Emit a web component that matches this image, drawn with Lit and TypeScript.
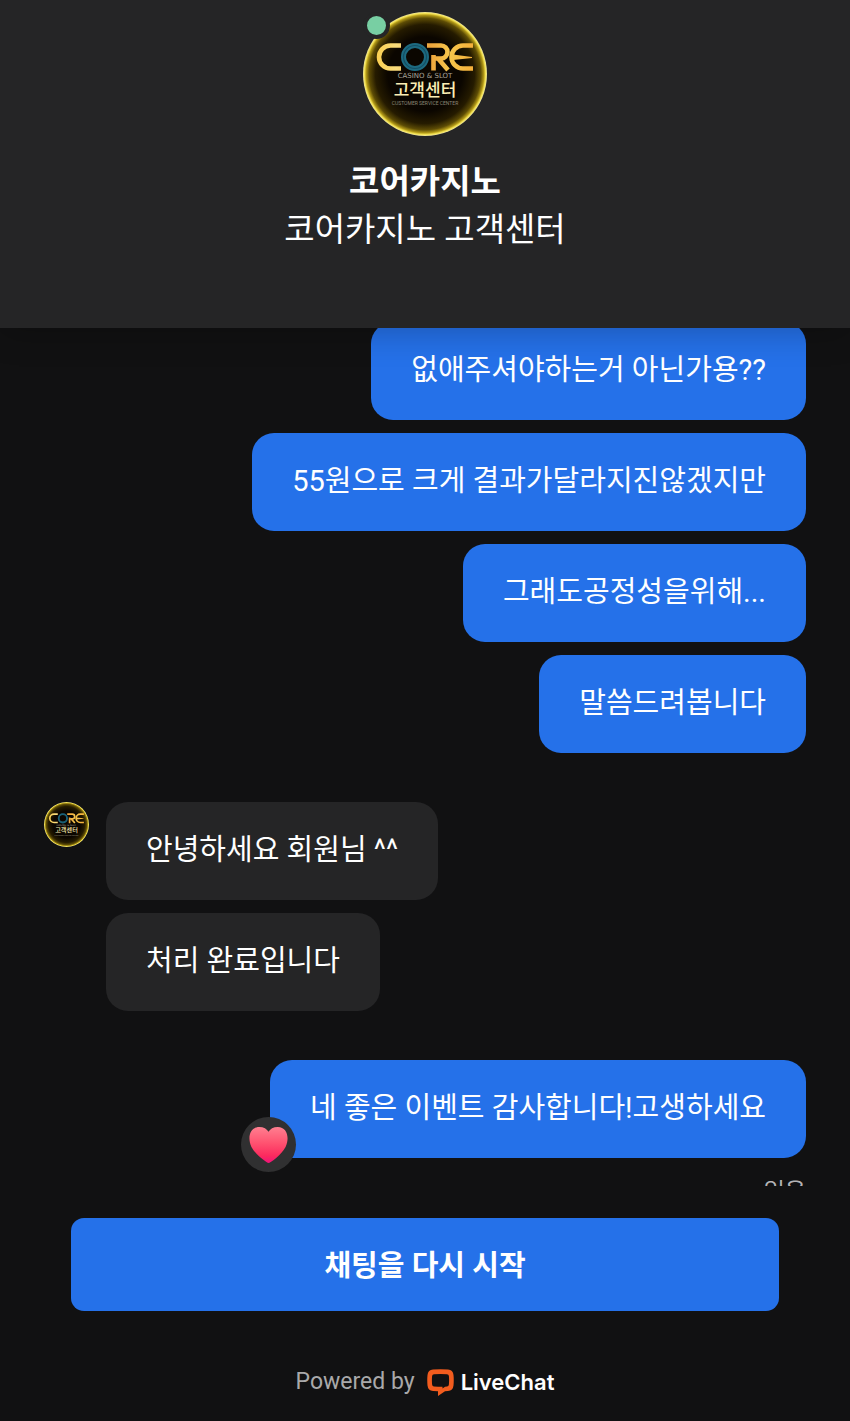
import { LitElement, html, css, svg } from "lit";
import { customElement } from "lit/decorators.js";

const FONT = css`Roboto, "Noto Sans CJK KR", sans-serif`;

@customElement("brand-avatar")
export class BrandAvatar extends LitElement {
  static styles = css`
    :host { display: block; }
    .logo { display: block; width: 100%; height: auto; }
    .name { font: 500 17px "Noto Sans CJK KR", sans-serif; fill: #fbeeb4; }
    .tag { font: 400 7px "DejaVu Sans", sans-serif; fill: #a8a49a; }
    .sub { font: 400 5px Roboto, sans-serif; fill: #8d8775; }
  `;

  render() {
    return html`<svg class="logo" viewBox="0 0 124 124" role="img" aria-label="CORE">
      <defs>
        <radialGradient id="disc">
          <stop offset="0.6" stop-color="#0b0600"></stop>
          <stop offset="0.8" stop-color="#251b00"></stop>
          <stop offset="0.9" stop-color="#5d4c05"></stop>
          <stop offset="0.95" stop-color="#b39a18"></stop>
          <stop offset="0.975" stop-color="#f2e04e"></stop>
          <stop offset="1" stop-color="#efe6a0"></stop>
        </radialGradient>
        <linearGradient id="gold" x1="14" x2="110" y1="0" y2="0" gradientUnits="userSpaceOnUse">
          <stop offset="0" stop-color="#fbcf50"></stop>
          <stop offset="0.2" stop-color="#f9dc7c"></stop>
          <stop offset="0.55" stop-color="#eda43c"></stop>
          <stop offset="0.75" stop-color="#f7c64c"></stop>
          <stop offset="1" stop-color="#f5b03a"></stop>
        </linearGradient>
      </defs>
      <circle cx="62" cy="62" r="62" fill="url(#disc)"></circle>
      ${svg`<g fill="none" stroke="url(#gold)" stroke-width="4.6">
        <path d="M38 33.500H27.500A11.500 11.500 0 0 0 27.500 56.500H38"></path>
        <path d="M64 33.500H78A6.500 6.500 0 0 1 78 46.500H72M75 46.500L85 58M70.500 43V58.500"></path>
        <path d="M110 33.500H100A11.500 11.500 0 0 0 100 56.500H110"></path>
      </g>
      <path d="M90 42.500L109 45V46L90 48Z" fill="url(#gold)"></path>
      <circle cx="52" cy="45" r="15" fill="#0b0600"></circle>
      <circle cx="52" cy="45" r="11.500" fill="none" stroke="#1d6a80" stroke-width="5"></circle>
      <circle cx="52" cy="45" r="11.500" fill="none" stroke="#144f63" stroke-width="1.200"></circle>`}
      <text class="tag" x="62" y="66" text-anchor="middle">CASINO &amp; SLOT</text>
      <text class="name" x="62" y="84" text-anchor="middle">고객센터</text>
      <text class="sub" x="62" y="93" text-anchor="middle">CUSTOMER SERVICE CENTER</text>
    </svg>`;
  }
}

interface Message { text: string; reaction?: boolean; }
interface Group { from: "me" | "agent"; messages: Message[]; status?: string; }

const groups: Group[] = [
  {
    from: "me",
    messages: [
      { text: "없애주셔야하는거 아닌가용??" },
      { text: "55원으로 크게 결과가달라지진않겠지만" },
      { text: "그래도공정성을위해..." },
      { text: "말씀드려봅니다" },
    ],
  },
  { from: "agent", messages: [{ text: "안녕하세요 회원님 ^^" }, { text: "처리 완료입니다" }] },
  { from: "me", messages: [{ text: "네 좋은 이벤트 감사합니다!고생하세요", reaction: true }], status: "읽음" },
];

@customElement("app-root")
export class AppRoot extends LitElement {
  static styles = css`
    :host {
      display: flex;
      flex-direction: column;
      height: 100vh;
      overflow: hidden;
      background: #111112;
      color: #fff;
      font-family: ${FONT};
    }
    * { box-sizing: border-box; }
    h1, p, ol { margin: 0; padding: 0; list-style: none; }
    .header {
      flex: none;
      position: relative;
      z-index: 1;
      display: flex;
      flex-direction: column;
      align-items: center;
      padding: 12px 24px 74px;
      background: #252526;
      box-shadow: 0 4px 32px rgba(0, 0, 0, 0.24);
      text-align: center;
    }
    .portrait { position: relative; width: 124px; margin-bottom: 22px; }
    .online {
      position: absolute;
      top: 0;
      left: 0;
      width: 27px;
      height: 27px;
      border: 4px solid #252526;
      border-radius: 50%;
      background: #78cfa3;
    }
    .title { font-size: 33px; line-height: 48px; font-weight: 700; }
    .subtitle { font-size: 33px; line-height: 48px; }
    .feed { flex: 1; min-height: 0; overflow: hidden; }
    .thread {
      display: flex;
      flex-direction: column;
      gap: 49px;
      margin-top: -6px;
      padding: 0 44px;
    }
    .group { display: flex; gap: 17px; align-items: flex-start; }
    .group.me { justify-content: flex-end; }
    .avatar { flex: none; width: 45px; }
    .messages { display: flex; flex-direction: column; gap: 13px; align-items: flex-start; }
    .me .messages { align-items: flex-end; }
    .bubble {
      position: relative;
      padding: 27px 40px 29px;
      border-radius: 22px;
      background: #252526;
      font-size: 29px;
      line-height: 42px;
    }
    .me .bubble { background: #2571e9; }
    .reaction {
      position: absolute;
      left: -29px;
      bottom: -14px;
      width: 55px;
      height: 55px;
      padding: 8px;
      border-radius: 50%;
      background: #303031;
    }
    .heart { display: block; width: 100%; height: 100%; }
    .status { padding-top: 4px; font-size: 23px; line-height: 34px; color: #b4b4b6; }
    .footer {
      flex: none;
      display: flex;
      flex-direction: column;
      gap: 54px;
      padding: 32px 71px 22px;
    }
    .restart {
      width: 100%;
      padding: 26px 24px 22px;
      border: 0;
      border-radius: 13px;
      background: #2571e9;
      color: #fff;
      font-family: inherit;
      font-size: 29px;
      line-height: 45px;
      font-weight: 700;
      cursor: pointer;
    }
    .powered {
      display: flex;
      justify-content: center;
      align-items: center;
      gap: 12px;
      font-size: 23px;
      line-height: 34px;
      color: #a9a9aa;
    }
    .brand {
      display: flex;
      align-items: center;
      gap: 7px;
      color: #fff;
      font-family: Inter, sans-serif;
      font-size: 22px;
      font-weight: 600;
      text-decoration: none;
    }
    .mark { width: 27px; height: 27px; }
  `;

  private renderMessage(m: Message) {
    return html`<li class="bubble">
      ${m.text}
      ${m.reaction
        ? html`<span class="reaction"><svg class="heart" viewBox="0 0 40 40" role="img" aria-label="하트">
            <defs>
              <linearGradient id="heart" x1="0" x2="0" y1="0" y2="1">
                <stop offset="0" stop-color="#ff7f90"></stop>
                <stop offset="0.45" stop-color="#ff5270"></stop>
                <stop offset="0.8" stop-color="#fb2a5e"></stop>
                <stop offset="1" stop-color="#f0127a"></stop>
              </linearGradient>
            </defs>
            <path fill="url(#heart)" d="M20 39C18.500 39 7 31 2.500 22.500C-2 13 1 2 10.500 2C15 2 18.500 4 20 7C21.500 4 25 2 29.500 2C39 2 42 13 37.500 22.500C33 31 21.500 39 20 39Z"></path>
          </svg></span>`
        : ""}
    </li>`;
  }

  render() {
    return html`
      <header class="header">
        <div class="portrait">
          <brand-avatar></brand-avatar>
          <span class="online"></span>
        </div>
        <h1 class="title">코어카지노</h1>
        <p class="subtitle">코어카지노 고객센터</p>
      </header>
      <main class="feed">
        <div class="thread">
          ${groups.map((g) => html`
            <section class="group ${g.from}">
              ${g.from === "agent" ? html`<brand-avatar class="avatar"></brand-avatar>` : ""}
              <ol class="messages">
                ${g.messages.map((m) => this.renderMessage(m))}
                ${g.status ? html`<li class="status">${g.status}</li>` : ""}
              </ol>
            </section>`)}
        </div>
      </main>
      <footer class="footer">
        <button class="restart" type="button">채팅을 다시 시작</button>
        <div class="powered">
          <span>Powered by</span>
          <a class="brand" href="#">
            <svg class="mark" viewBox="0 0 27 27" aria-hidden="true">
              <path fill="#f25c1e" fill-rule="evenodd" d="M6 0.600Q13.500 -0.200 21 0.600Q26 1 26.500 6Q27 11 26.500 16.500Q26 21.500 21 22L18 22.300L11 27V22.300L6 22Q1 21.500 0.500 16.500Q0 11 0.500 6Q1 1 6 0.600ZM7 5.200Q5.300 5.400 5.100 7Q4.700 11 5.100 15.500Q5.300 17.400 7 17.600L11 17.800H15.500V19.500L18 17.700L20 17.600Q21.700 17.400 21.900 15.500Q22.300 11 21.900 7Q21.700 5.400 20 5.200Q13.500 4.700 7 5.200Z"></path>
            </svg>
            <span>LiveChat</span>
          </a>
        </div>
      </footer>
    `;
  }
}
